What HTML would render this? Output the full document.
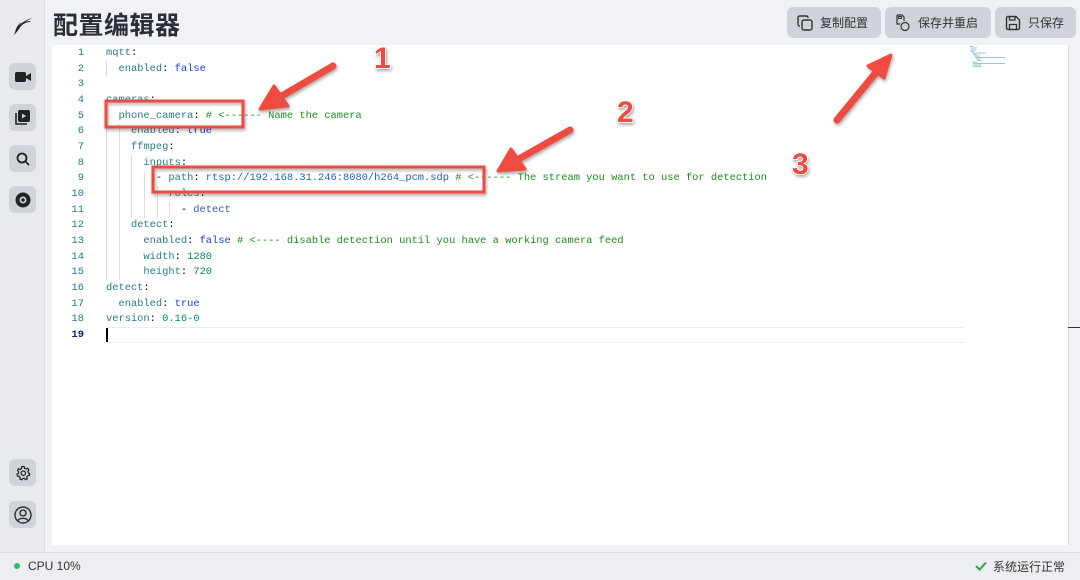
<!DOCTYPE html>
<html><head><meta charset="utf-8"><style>
*{margin:0;padding:0;box-sizing:border-box}
body{width:1080px;height:580px;overflow:hidden;background:#f1f2f6;font-family:"Liberation Sans","Noto Sans CJK SC",sans-serif;position:relative}
.side{position:absolute;left:0;top:0;width:45px;height:552px;background:#e9eaee;border-right:1px solid #dcdde2}
.ib{position:absolute;left:9px;width:27px;height:27px;background:#cfd3da;border-radius:6px;display:flex;align-items:center;justify-content:center}
h1{position:absolute;left:53px;top:6px;font-size:25px;font-weight:bold;color:#2a2e36;font-family:"Noto Sans CJK SC",sans-serif;letter-spacing:0.5px}
.btn{position:absolute;top:7px;height:31px;background:#cfd3da;border-radius:6px;font-size:12px;color:#333;font-family:"Noto Sans CJK SC",sans-serif;display:flex;align-items:center;gap:7px;padding-left:10px}
.ed{position:absolute;left:52px;top:45px;width:1016px;height:500px;background:#fff}
.code{position:absolute;left:0;top:0;font-family:"Liberation Mono",monospace;font-size:10.4px;line-height:15.67px;white-space:pre}
.ln{position:absolute;left:0;top:1px;width:32px;text-align:right;color:#237893;font-family:"Liberation Mono",monospace;font-size:10.5px;line-height:15.67px;white-space:pre}
.k{color:#2b7a8b}.v{color:#1a3fcf}.c{color:#1f8a1f}.s{color:#2a5db0}.n{color:#098658}
.status{position:absolute;left:0;top:552px;width:1080px;height:28px;background:#eceef1;border-top:1px solid #dcdde2;font-size:12px;color:#333}
</style></head><body>
<div class="side">
 <svg style="position:absolute;left:12px;top:13px" width="22" height="24" viewBox="0 0 22 24"><path d="M2 22 C4 16 5 12 9 9 L6 13 C9 10 14 7 20 5 L13 9 C16 8 18 8 19 9 C15 9 12 10 9 13 C7 16 5 19 2 22Z" fill="#222"/></svg>
 <div class="ib" style="top:63px"><svg width="16" height="12" viewBox="0 0 16 12"><rect x="0" y="1" width="11" height="10" rx="2" fill="#222"/><path d="M11 5 L16 2 V10 L11 7Z" fill="#222"/></svg></div>
 <div class="ib" style="top:104px"><svg width="15" height="15" viewBox="0 0 15 15"><rect x="3" y="0" width="12" height="12" rx="2" fill="#222"/><path d="M1 3 V14 H12" stroke="#222" stroke-width="1.6" fill="none"/><path d="M7 3.5 L11 6 L7 8.5Z" fill="#cfd3da"/></svg></div>
 <div class="ib" style="top:145px"><svg width="14" height="14" viewBox="0 0 14 14"><circle cx="6" cy="6" r="4.5" stroke="#222" stroke-width="1.8" fill="none"/><path d="M9.5 9.5 L13 13" stroke="#222" stroke-width="1.8"/></svg></div>
 <div class="ib" style="top:186px"><svg width="16" height="16" viewBox="0 0 16 16"><circle cx="8" cy="8" r="7.5" fill="#222"/><circle cx="8" cy="8" r="3.5" fill="#cfd3da"/><circle cx="8" cy="8" r="1.8" fill="#222"/></svg></div>
 <div class="ib" style="top:459px"><svg width="16" height="16" viewBox="0 0 16 16"><path d="M8 1.5 L9.3 1.7 L9.7 3.4 L11.2 4.1 L12.7 3.2 L13.9 4.9 L12.9 6.3 L13.3 7.9 L14.8 8.6 L14.4 10.6 L12.7 10.7 L11.8 12.1 L12.3 13.8 L10.5 14.6 L9.4 13.3 L7.8 13.4 L6.8 14.8 L4.9 14.1 L5.2 12.4 L4.2 11.1 L2.5 11.1 L2 9.1 L3.5 8.3 L3.7 6.7 L2.5 5.4 L3.6 3.7 L5.2 4.4 L6.5 3.5 L6.7 1.7Z" stroke="#222" stroke-width="1.2" fill="none"/><circle cx="8.3" cy="8.2" r="2.2" stroke="#222" stroke-width="1.2" fill="none"/></svg></div>
 <div class="ib" style="top:501px"><svg width="18" height="18" viewBox="0 0 18 18"><circle cx="9" cy="9" r="8" stroke="#222" stroke-width="1.3" fill="none"/><circle cx="9" cy="7" r="3" stroke="#222" stroke-width="1.3" fill="none"/><path d="M3.8 15 C5 11.5 13 11.5 14.2 15" stroke="#222" stroke-width="1.3" fill="none"/></svg></div>
</div>
<h1>配置编辑器</h1>
<div class="btn" style="left:787px;width:94px"><svg width="16" height="16" viewBox="0 0 16 16"><rect x="5" y="5" width="10" height="10" rx="2" stroke="#333" stroke-width="1.4" fill="none"/><path d="M3 11 H2.5 A1.5 1.5 0 0 1 1 9.5 V2.5 A1.5 1.5 0 0 1 2.5 1 H9.5 A1.5 1.5 0 0 1 11 2.5 V3" stroke="#333" stroke-width="1.4" fill="none"/></svg>复制配置</div>
<div class="btn" style="left:885px;width:106px"><svg width="16" height="18" viewBox="0 0 16 18"><path d="M2 1 H7 L9 3 V7 M2 1 V10 H5" stroke="#333" stroke-width="1.2" fill="none"/><rect x="3.5" y="2.5" width="3" height="2" stroke="#333" fill="none"/><circle cx="10" cy="12.5" r="4" stroke="#333" stroke-width="1.2" fill="none"/></svg>保存并重启</div>
<div class="btn" style="left:995px;width:81px"><svg width="16" height="16" viewBox="0 0 16 16"><path d="M1.5 3 A1.5 1.5 0 0 1 3 1.5 H11 L14.5 5 V13 A1.5 1.5 0 0 1 13 14.5 H3 A1.5 1.5 0 0 1 1.5 13Z" stroke="#333" stroke-width="1.4" fill="none"/><path d="M4.5 1.5 V5 H10 V1.5 M4.5 14.5 V9.5 H11.5 V14.5" stroke="#333" stroke-width="1.3" fill="none"/></svg>只保存</div>
<div class="ed">
<div class="ln" style="top:1px">1
2
3
4
5
6
7
8
9
10
11
12
13
14
15
16
17
18
<b style="color:#0b216f">19</b></div>
<div style="position:absolute;left:54px;top:282px;width:858px;height:16px;border-top:1px solid #eee;border-bottom:1px solid #eee"></div>
<div style="position:absolute;left:54px;top:283px;width:2px;height:14px;background:#000"></div>
<div style="position:absolute;left:54px;top:16px;width:1px;height:16px;background:#ddd"></div>
<div style="position:absolute;left:54px;top:63px;width:1px;height:172px;background:#ddd"></div>
<div style="position:absolute;left:67px;top:79px;width:1px;height:156px;background:#ddd"></div>
<div style="position:absolute;left:79px;top:110px;width:1px;height:63px;background:#ddd"></div>
<div style="position:absolute;left:92px;top:126px;width:1px;height:47px;background:#ddd"></div>
<div style="position:absolute;left:105px;top:141px;width:1px;height:32px;background:#ddd"></div>
<div style="position:absolute;left:117px;top:157px;width:1px;height:16px;background:#ddd"></div>
<div class="code" style="left:54px;top:1px"><span class="k">mqtt</span>:
  <span class="k">enabled</span>: <span class="v">false</span>

<span class="k">cameras</span>:
  <span class="k">phone_camera</span>: <span class="c"># &lt;------ Name the camera</span>
    <span class="k">enabled</span>: <span class="v">true</span>
    <span class="k">ffmpeg</span>:
      <span class="k">inputs</span>:
        - <span class="k">path</span>: <span class="s">rtsp://192.168.31.246:8080/h264_pcm.sdp</span> <span class="c"># &lt;------ The stream you want to use for detection</span>
          <span class="k">roles</span>:
            - <span class="s">detect</span>
    <span class="k">detect</span>:
      <span class="k">enabled</span>: <span class="v">false</span> <span class="c"># &lt;---- disable detection until you have a working camera feed</span>
      <span class="k">width</span>: <span class="n">1280</span>
      <span class="k">height</span>: <span class="n">720</span>
<span class="k">detect</span>:
  <span class="k">enabled</span>: <span class="v">true</span>
<span class="k">version</span>: <span class="n">0.16-0</span>
</div>
<svg style="position:absolute;left:917px;top:0" width="60" height="32" opacity="0.7"><g stroke-width="0.7"><path d="M1 1.5h3M2 3h6M1 5h6M2 6.5h3M3 8h14M4 9.5h4M5 11h6M6 12.5h30M7 14h4M8 15.5h4M3 17h5M4 18.5h32M4 20h8M4 21.5h8" stroke="#3a9a9a"/></g></svg>
</div>
<div style="position:absolute;left:1068px;top:45px;width:1px;height:500px;background:#ddd"></div>
<div style="position:absolute;left:1068px;top:327px;width:12px;height:1px;background:#333"></div>
<svg style="position:absolute;left:0;top:0" width="1080" height="580">
<defs><filter id="sh" x="-20%" y="-20%" width="140%" height="140%"><feDropShadow dx="1" dy="2" stdDeviation="1.5" flood-opacity="0.35"/></filter></defs>
<g fill="none" stroke="#ef4b3f" stroke-width="3" filter="url(#sh)">
<rect x="106" y="101" width="137" height="26"/>
<rect x="153" y="167" width="331" height="25"/>
</g>
<g fill="#ef4b3f" stroke="#ef4b3f" stroke-linecap="round" filter="url(#sh)">
<path d="M333 66 L280 97" stroke-width="7"/><path d="M260 109 L274 86 L288 106Z" stroke-width="3" stroke-linejoin="round"/>
<path d="M570 130 L517 160" stroke-width="7"/><path d="M498 171 L511 149 L525 169Z" stroke-width="3" stroke-linejoin="round"/>
<path d="M837 120 L878 70" stroke-width="7"/><path d="M891 55 L868 66 L884 78Z" stroke-width="3" stroke-linejoin="round"/>
</g>
<g font-family="Liberation Sans,sans-serif" font-weight="bold" font-size="30" fill="#ef4b3f" stroke="#fff" stroke-width="1.5" paint-order="stroke" filter="url(#sh)">
<text x="374" y="68">1</text><text x="617" y="122">2</text><text x="792" y="174">3</text>
</g>
</svg>
<div class="status"><span style="position:absolute;left:14px;top:10px;width:6px;height:6px;border-radius:50%;background:#22c55e"></span><span style="position:absolute;left:28px;top:6px">CPU 10%</span>
<svg style="position:absolute;left:975px;top:8px" width="12" height="10" viewBox="0 0 12 10"><path d="M1 5 L4.5 8.5 L11 1.5" stroke="#22a84a" stroke-width="2" fill="none"/></svg>
<span style="position:absolute;left:993px;top:5px;font-family:'Noto Sans CJK SC',sans-serif">系统运行正常</span></div>
</body></html>
